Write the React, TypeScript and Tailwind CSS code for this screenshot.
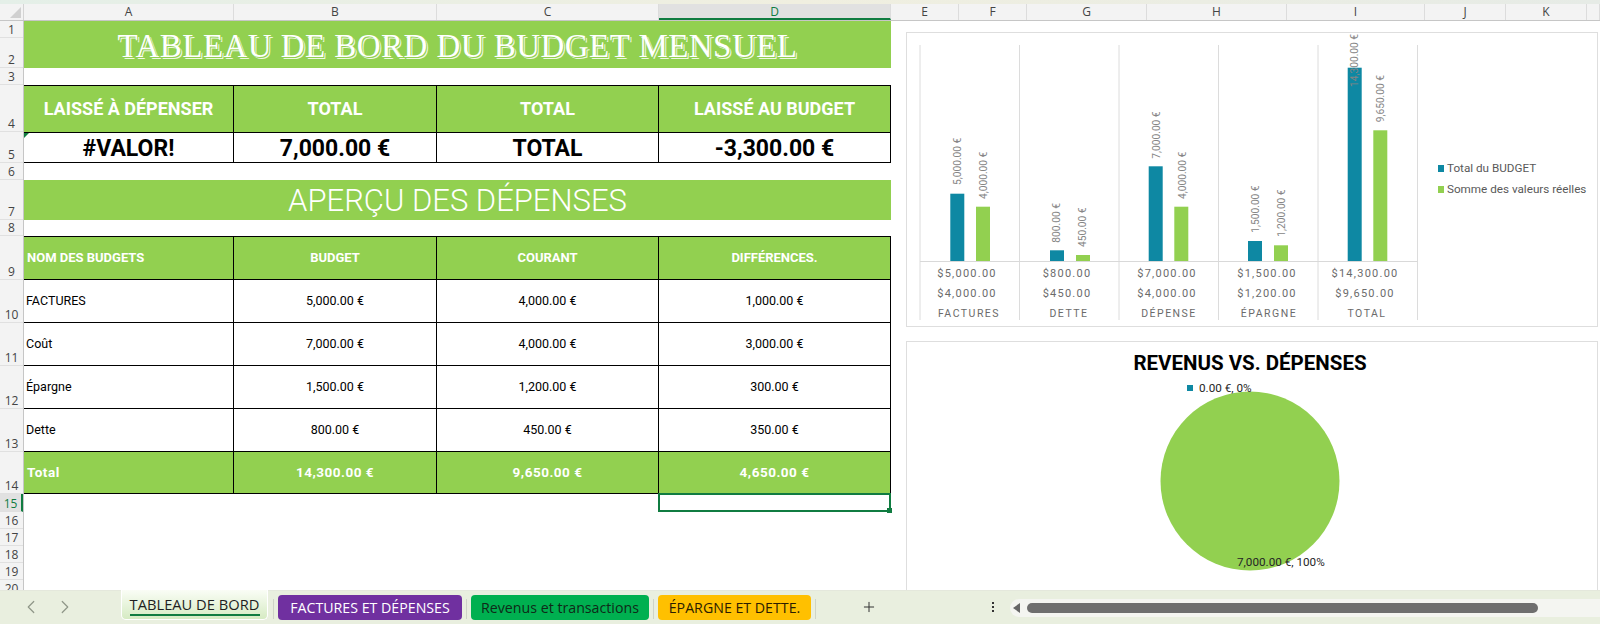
import React from "react";
import { ChevronLeft, ChevronRight, Plus } from "lucide-react";

const rowHeaders = [
  { n: "1", cls: "h-[17px]" },
  { n: "2", cls: "h-[30px]" },
  { n: "3", cls: "h-[17px]" },
  { n: "4", cls: "h-[47px]" },
  { n: "5", cls: "h-[31px]" },
  { n: "6", cls: "h-[17px]" },
  { n: "7", cls: "h-[40px]" },
  { n: "8", cls: "h-[16px]" },
  { n: "9", cls: "h-[44px]" },
  { n: "10", cls: "h-[43px]" },
  { n: "11", cls: "h-[43px]" },
  { n: "12", cls: "h-[43px]" },
  { n: "13", cls: "h-[43px]" },
  { n: "14", cls: "h-[42px]" },
  { n: "15", cls: "h-[18px]" },
  { n: "16", cls: "h-[17px]" },
  { n: "17", cls: "h-[17px]" },
  { n: "18", cls: "h-[17px]" },
  { n: "19", cls: "h-[17px]" },
  { n: "20", cls: "h-[17px]" },
];

const colHeaders = [
  { n: "A", cls: "w-[210px]" },
  { n: "B", cls: "w-[203px]" },
  { n: "C", cls: "w-[222px]" },
  { n: "D", cls: "w-[232px] bg-[#e1e1e1] border-b-2 border-b-[#107c41] text-[#107c41]" },
  { n: "E", cls: "w-[68px]" },
  { n: "F", cls: "w-[68px]" },
  { n: "G", cls: "w-[120px]" },
  { n: "H", cls: "w-[140px]" },
  { n: "I", cls: "w-[138px]" },
  { n: "J", cls: "w-[81px]" },
  { n: "K", cls: "w-[81px]" },
  { n: "", cls: "flex-1" },
];

const tableCols = "grid grid-cols-[210px_203px_222px_232px]";

const budgetRows = [
  ["FACTURES", "5,000.00 €", "4,000.00 €", "1,000.00 €"],
  ["Coût", "7,000.00 €", "4,000.00 €", "3,000.00 €"],
  ["Épargne", "1,500.00 €", "1,200.00 €", "300.00 €"],
  ["Dette", "800.00 €", "450.00 €", "350.00 €"],
];

const groups = [
  {
    name: "FACTURES",
    center: 967,
    budget: { x: 950.3, top: 193.7, label: "5,000.00 €", lx: 956.7, ly: 185 },
    actual: { x: 976, top: 206.7, label: "4,000.00 €", lx: 982.7, ly: 199 },
    rows: ["$5,000.00", "$4,000.00"],
  },
  {
    name: "DETTE",
    center: 1067,
    budget: { x: 1050, top: 250.3, label: "800.00 €", lx: 1056, ly: 242.7 },
    actual: { x: 1076, top: 255, label: "450.00 €", lx: 1082, ly: 247 },
    rows: ["$800.00", "$450.00"],
  },
  {
    name: "DÉPENSE",
    center: 1167,
    budget: { x: 1148.7, top: 166.3, label: "7,000.00 €", lx: 1155.7, ly: 158.7 },
    actual: { x: 1174.3, top: 206.7, label: "4,000.00 €", lx: 1181.7, ly: 199 },
    rows: ["$7,000.00", "$4,000.00"],
  },
  {
    name: "ÉPARGNE",
    center: 1267,
    budget: { x: 1248, top: 241, label: "1,500.00 €", lx: 1255, ly: 232.7 },
    actual: { x: 1274, top: 245.3, label: "1,200.00 €", lx: 1280.7, ly: 236.7 },
    rows: ["$1,500.00", "$1,200.00"],
  },
  {
    name: "TOTAL",
    center: 1365,
    budget: { x: 1347.7, top: 67.7, label: "14,300.00 €", lx: 1354, ly: 87 },
    actual: { x: 1373.3, top: 130.3, label: "9,650.00 €", lx: 1380.3, ly: 122.3 },
    rows: ["$14,300.00", "$9,650.00"],
  },
];

const gridLines = [920, 1019.5, 1119, 1218.5, 1318, 1417.5];

const BudgetChart = () => (
  <svg viewBox="907 33 690 293" className="block w-full h-full font-['Roboto',sans-serif]">
    {gridLines.map((x) => (
      <line key={x} x1={x} x2={x} y1={45} y2={320} stroke="#dcdcdc" strokeWidth={1} />
    ))}
    <line x1={920} x2={1417.5} y1={261.5} y2={261.5} stroke="#d9d9d9" strokeWidth={1} />
    {groups.map((g) => (
      <g key={g.name}>
        <rect x={g.budget.x} y={g.budget.top} width={14} height={261 - g.budget.top} fill="#0e88a3" />
        <rect x={g.actual.x} y={g.actual.top} width={14} height={261 - g.actual.top} fill="#92d050" />
        {[g.budget, g.actual].map((b) => (
          <text
            key={b.x}
            transform={`translate(${b.lx + 4} ${b.ly}) rotate(-90)`}
            fontSize={10.2}
            fill="#858585"
          >
            {b.label}
          </text>
        ))}
        <text x={g.center} y={277} textAnchor="middle" fontSize={11} letterSpacing={1.25} fill="#6b6b6b">
          {g.rows[0]}
        </text>
        <text x={g.center} y={297} textAnchor="middle" fontSize={11} letterSpacing={1.25} fill="#6b6b6b">
          {g.rows[1]}
        </text>
        <text x={g.center + 2} y={317} textAnchor="middle" fontSize={10.5} letterSpacing={1.5} fill="#6b6b6b">
          {g.name}
        </text>
      </g>
    ))}
    <rect x={1438} y={165} width={6} height={7} fill="#0e88a3" />
    <text x={1447} y={171.5} fontSize={11.7} fill="#595959">
      Total du BUDGET
    </text>
    <rect x={1438} y={186} width={6} height={7} fill="#92d050" />
    <text x={1447} y={193} fontSize={11.7} fill="#595959">
      Somme des valeurs réelles
    </text>
  </svg>
);

const PieChart = () => (
  <div className="relative h-[300px]">
    <h2 className="pt-[8px] pr-[4px] text-center text-[20.5px] leading-[26px] font-bold text-black">
      REVENUS VS. DÉPENSES
    </h2>
    <svg viewBox="0 0 180 180" className="absolute left-[253px] top-[49px] w-[180px] h-[180px]">
      <circle cx={90} cy={90} r={89.5} fill="#92d050" />
    </svg>
    <div className="absolute left-[280px] top-[39px] flex items-center gap-[6px] text-[11.7px] leading-[14px] text-[#262626]">
      <span className="w-[6px] h-[6px] bg-[#0e88a3]" />
      <span>0.00 €, 0%</span>
    </div>
    <div className="absolute left-[330px] top-[213px] text-[11.7px] leading-[14px] text-[#262626]">
      7,000.00 €, 100%
    </div>
  </div>
);

const App = () => {
  return (
    <div className="w-[1600px] h-[624px] overflow-hidden flex flex-col bg-white font-['Roboto',sans-serif]">
      <div className="h-[4px] shrink-0 bg-gradient-to-r from-[#e4efe8] via-[#f0efe0] to-[#e6ebe6]" />

      {/* column letters */}
      <div className="h-[17px] shrink-0 flex bg-[#f3f3f3] border-b border-[#c6c6c6] text-[12px] leading-[16px] text-[#444] font-['Open_Sans',sans-serif]">
        <div className="w-[24px] shrink-0 border-r border-[#d4d4d4] flex justify-end items-end">
          <div className="w-0 h-0 mr-[2px] mb-[2px] border-l-[11px] border-l-transparent border-b-[11px] border-b-[#d0d0d0]" />
        </div>
        {colHeaders.map((c, i) => (
          <div key={i} className={`${c.cls} shrink-0 text-center border-r border-[#dcdcdc]`}>
            {c.n}
          </div>
        ))}
      </div>

      <div className="flex-1 min-h-0 flex overflow-hidden">
        {/* row numbers */}
        <div className="w-[24px] shrink-0 bg-[#f3f3f3] border-r border-[#c6c6c6] text-[12px] leading-[15px] text-[#444] text-center font-['Open_Sans',sans-serif]">
          {rowHeaders.map((r) => (
            <div
              key={r.n}
              className={`${r.cls} flex items-end justify-center border-b border-[#e0e0e0] ${
                r.n === "15" ? "bg-[#e1e1e1] text-[#107c41] border-r-2 border-r-[#107c41]" : ""
              }`}
            >
              {r.n}
            </div>
          ))}
        </div>

        {/* sheet cells */}
        <div className="w-[867px] shrink-0 text-black">
          <div className="h-[47px] pt-[3px] bg-[#92d050] flex items-center justify-center text-white text-[33px] leading-none tracking-[0.45px] font-['Liberation_Serif',serif] [text-shadow:1px_1px_0_#92d050,2px_2px_0_#eef8e2]">
            TABLEAU DE BORD DU BUDGET MENSUEL
          </div>
          <div className="h-[17px]" />

          <div className={`${tableCols} h-[48px] bg-[#92d050] border-y border-black text-white text-[18px] leading-none font-bold`}>
            <div className="flex items-center justify-center border-r border-black">LAISSÉ À DÉPENSER</div>
            <div className="flex items-center justify-center border-r border-black">TOTAL</div>
            <div className="flex items-center justify-center border-r border-black">TOTAL</div>
            <div className="flex items-center justify-center border-r border-black">LAISSÉ AU BUDGET</div>
          </div>
          <div className={`${tableCols} h-[30px] border-b border-black text-[23px] leading-none font-bold`}>
            <div className="relative flex items-center justify-center pt-[2px] border-r border-black">
              <span className="absolute left-0 top-0 w-0 h-0 border-t-[5px] border-t-[#107c41] border-r-[5px] border-r-transparent" />
              #VALOR!
            </div>
            <div className="flex items-center justify-center pt-[2px] border-r border-black">7,000.00 €</div>
            <div className="flex items-center justify-center pt-[2px] border-r border-black">TOTAL</div>
            <div className="flex items-center justify-center pt-[2px] border-r border-black">-3,300.00 €</div>
          </div>
          <div className="h-[17px]" />

          <div className="h-[40px] bg-[#92d050] flex items-center justify-center text-white text-[31px] leading-none font-light">
            APERÇU DES DÉPENSES
          </div>
          <div className="h-[16px]" />

          <div className={`${tableCols} h-[44px] bg-[#92d050] border-y border-black text-white text-[13px] font-bold`}>
            <div className="flex items-center pl-[3px] border-r border-black">NOM DES BUDGETS</div>
            <div className="flex items-center justify-center border-r border-black">BUDGET</div>
            <div className="flex items-center justify-center border-r border-black">COURANT</div>
            <div className="flex items-center justify-center border-r border-black">DIFFÉRENCES.</div>
          </div>
          {budgetRows.map((row) => (
            <div key={row[0]} className={`${tableCols} h-[43px] border-b border-black text-[12.5px]`}>
              <div className="flex items-center pl-[2px] border-r border-black">{row[0]}</div>
              <div className="flex items-center justify-center border-r border-black">{row[1]}</div>
              <div className="flex items-center justify-center border-r border-black">{row[2]}</div>
              <div className="flex items-center justify-center border-r border-black">{row[3]}</div>
            </div>
          ))}
          <div className={`${tableCols} h-[42px] bg-[#92d050] border-b border-black text-white text-[13.5px] font-bold tracking-[0.5px]`}>
            <div className="flex items-center pl-[3px] border-r border-black">Total</div>
            <div className="flex items-center justify-center border-r border-black">14,300.00 €</div>
            <div className="flex items-center justify-center border-r border-black">9,650.00 €</div>
            <div className="flex items-center justify-center border-r border-black">4,650.00 €</div>
          </div>
          <div className={`${tableCols} h-[18px]`}>
            <div className="col-start-4 relative -mt-px -ml-px border-2 border-[#107c41]">
              <span className="absolute -right-[3px] -bottom-[3px] w-[5px] h-[5px] bg-[#107c41]" />
            </div>
          </div>
        </div>

        {/* charts */}
        <div className="flex-1 pl-[15px] pr-[2px] pt-[11px] flex flex-col gap-[14px]">
          <div className="h-[295px] shrink-0 border border-[#dedede] bg-white">
            <BudgetChart />
          </div>
          <div className="shrink-0 border border-[#dedede] bg-white">
            <PieChart />
          </div>
        </div>
      </div>

      {/* sheet tabs */}
      <div className="h-[34px] shrink-0 flex items-stretch bg-[#e9efdf] border-t border-[#e4e8dc] font-['Open_Sans',sans-serif] text-[14.2px]">
        <div className="w-[121px] shrink-0 flex items-center gap-[12px] pl-[20px] pb-[2px] text-[#8f9688]">
          <ChevronLeft size={22} strokeWidth={1.3} />
          <ChevronRight size={22} strokeWidth={1.3} />
        </div>
        <div className="w-[147px] h-[30px] shrink-0 -mt-px flex flex-col items-center justify-end pb-[3px] rounded-b-[5px] border-x border-b border-white bg-gradient-to-b from-[#fafdf6] to-[#d6ebc3] text-[#1f1f1f]">
          <span className="leading-[19px] text-[14.7px] font-medium whitespace-nowrap">TABLEAU DE BORD</span>
          <span className="w-[130px] h-[2px] bg-[#107c41]" />
        </div>
        <div className="w-[1px] h-[20px] mt-[8px] ml-[5px] mr-[4px] bg-[#cfd4c7]" />
        <div className="w-[184px] h-[25px] mt-[4px] flex items-center justify-center rounded-[4px] bg-[#7030a0] text-white whitespace-nowrap">
          FACTURES ET DÉPENSES
        </div>
        <div className="w-[1px] h-[20px] mt-[8px] mx-[4px] bg-[#cfd4c7]" />
        <div className="w-[178px] h-[25px] mt-[4px] flex items-center justify-center rounded-[4px] bg-[#00b050] text-[#0f2a18] whitespace-nowrap">
          Revenus et transactions
        </div>
        <div className="w-[1px] h-[20px] mt-[8px] mx-[4px] bg-[#cfd4c7]" />
        <div className="w-[153px] h-[25px] mt-[4px] flex items-center justify-center rounded-[4px] bg-[#ffc000] text-[#2b1d00] whitespace-nowrap">
          ÉPARGNE ET DETTE.
        </div>
        <div className="w-[1px] h-[20px] mt-[8px] ml-[4px] bg-[#cfd4c7]" />
        <div className="w-[106px] flex items-center justify-center pb-[2px] text-[#333]">
          <Plus size={16} strokeWidth={1.5} />
        </div>
        <div className="w-[20px] ml-[61px] flex flex-col items-center justify-center gap-[2px] pb-[2px]">
          <span className="w-[2px] h-[2px] bg-[#333]" />
          <span className="w-[2px] h-[2px] bg-[#333]" />
          <span className="w-[2px] h-[2px] bg-[#333]" />
        </div>
        <div className="flex-1 h-[18px] mt-[8px] ml-[7px] flex items-center rounded-l-[9px] bg-[#f4f5f1]">
          <span className="w-0 h-0 ml-[3px] border-y-[5px] border-y-transparent border-r-[7px] border-r-[#666]" />
          <span className="w-[511px] h-[10px] ml-[7px] rounded-[5px] bg-[#6e6e6e]" />
        </div>
      </div>
    </div>
  );
};

export default App;
